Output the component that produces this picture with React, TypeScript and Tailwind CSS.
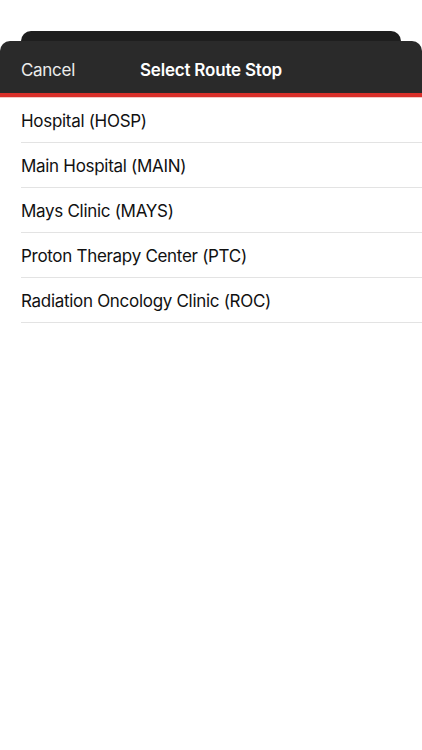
import React from "react";

const stops = [
  "Hospital (HOSP)",
  "Main Hospital (MAIN)",
  "Mays Clinic (MAYS)",
  "Proton Therapy Center (PTC)",
  "Radiation Oncology Clinic (ROC)",
];

export default function App() {
  return (
    <div
      className="w-[422px] h-[750px] bg-white overflow-hidden"
      style={{ fontFamily: "Inter, 'Noto Sans', sans-serif" }}
    >
      <div className="h-[31px]" />
      <div className="mx-[21px] h-[10px] rounded-t-[10px] bg-[#1e1e1e]" />
      <div className="h-[52px] pt-[7px] rounded-t-[10px] bg-[#2a2a2a] relative flex items-center">
        <span className="pl-[21px] text-[17px] text-[#ececec] tracking-[-0.3px]">Cancel</span>
        <span className="absolute left-0 right-0 text-center text-[17px] font-semibold text-white tracking-[-0.2px] pointer-events-none">
          Select Route Stop
        </span>
      </div>
      <div className="h-[4px] bg-[#d8302a]" />
      <div className="h-[1px] bg-[#f3c9c6]" />
      <div>
        {stops.map((s) => (
          <div key={s} className="pl-[21px]">
            <div className="h-[45px] pt-[3px] flex items-center border-b border-[#e3e3e3] text-[17px] text-[#111] tracking-[-0.3px]">
              {s}
            </div>
          </div>
        ))}
      </div>
    </div>
  );
}
